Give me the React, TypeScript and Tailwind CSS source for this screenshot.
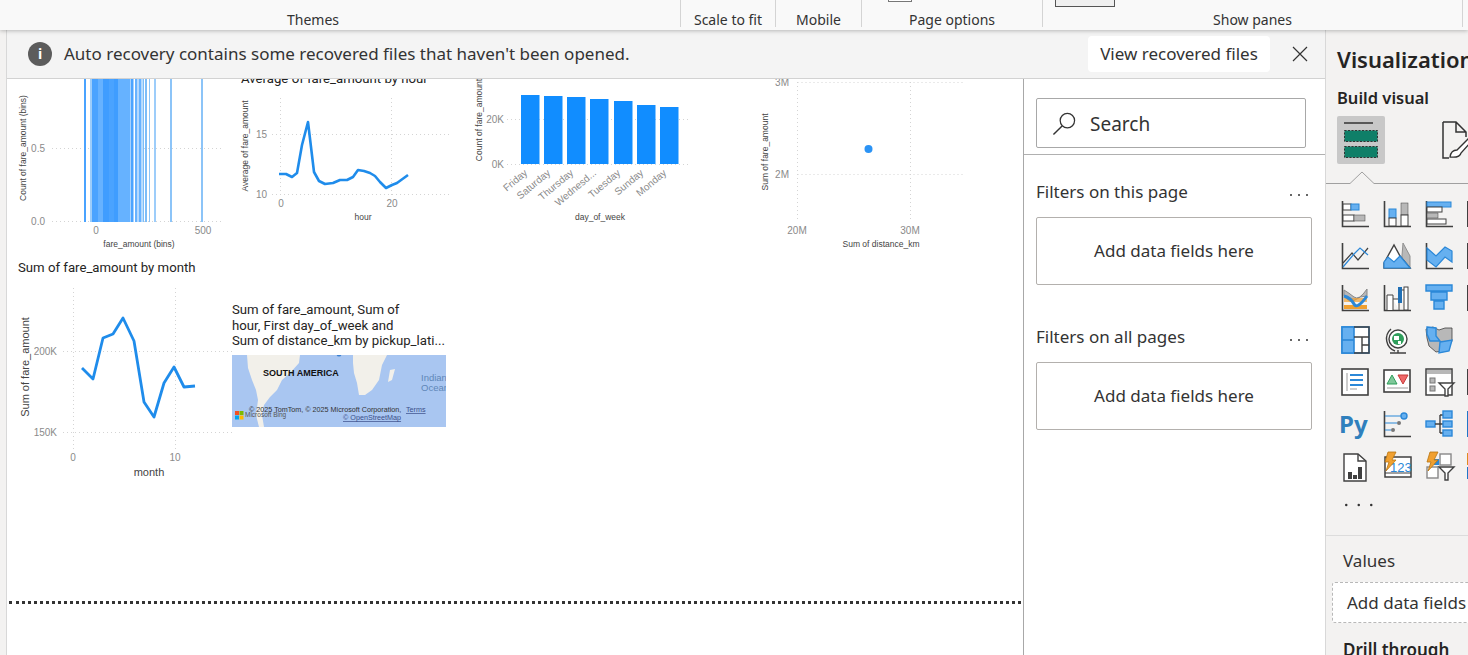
import React from "react";

const DARK = "#404040";
const BLUE = "#2b88d8";
const LIGHT = "#66b0f0";
const GR = "#b8b8b8";

const Ax = () => <path d="M1.5 1v25.5H28" fill="none" stroke={DARK} strokeWidth="1.6" />;

const icons: React.ReactNode[] = [
  <g key="a"><Ax /><rect x="2" y="4" width="8" height="6" fill="#fff" stroke={DARK} /><rect x="10" y="4" width="8" height="6" fill={LIGHT} stroke={BLUE} /><rect x="2" y="15" width="11" height="6" fill="#fff" stroke={DARK} /><rect x="13" y="15" width="11" height="6" fill={GR} stroke={DARK} strokeWidth=".5" /></g>,
  <g key="b"><Ax /><rect x="6" y="9" width="7" height="9" fill={LIGHT} stroke={BLUE} /><rect x="6" y="18" width="7" height="8" fill="#fff" stroke={DARK} /><rect x="18" y="3" width="7" height="12" fill={GR} stroke={DARK} strokeWidth=".5" /><rect x="18" y="15" width="7" height="11" fill="#fff" stroke={DARK} /></g>,
  <g key="c"><Ax /><rect x="2" y="2" width="24" height="5" fill={LIGHT} stroke={BLUE} /><rect x="2" y="7" width="15" height="5" fill="#fff" stroke={DARK} /><rect x="2" y="13" width="11" height="5" fill={GR} stroke={DARK} strokeWidth=".5" /><rect x="2" y="19" width="19" height="5" fill="#fff" stroke={DARK} /></g>,
  <rect key="c4" x="0" y="1" width="2" height="26" fill={DARK} />,
  <g key="d"><Ax /><path d="M2 21 L11 11 L17 18 L27 6" fill="none" stroke={DARK} strokeWidth="1.2" /><path d="M2 25 L13 12 L19 6 L27 13" fill="none" stroke={BLUE} strokeWidth="1.2" /></g>,
  <g key="e"><path d="M20 1 L27 14 V26 H18 Z" fill={GR} stroke="#909090" /><path d="M1 21 L11 3 L17 14 L27 26 H1 Z" fill="#fff" stroke={DARK} strokeWidth="1.4" /><path d="M1 26 V20 L5 15 L11 20 L17 14 L27 26 Z" fill={LIGHT} stroke={BLUE} strokeWidth="1.2" /></g>,
  <g key="f"><Ax /><path d="M2 6 L11 14 L20 5 L27 9 V20 L20 15 L11 25 L2 18 Z" fill={LIGHT} stroke={BLUE} strokeWidth="1.2" /></g>,
  <rect key="f4" x="0" y="1" width="2" height="26" fill={DARK} />,
  <g key="g"><Ax /><path d="M3 6 Q8 9 13 13 T26 5 V12 Q19 12 14 16 T3 12 Z" fill={GR} stroke="#888" /><path d="M3 21 H26 V25 H3 Z" fill="#f0a030" /><path d="M3 14 H26 V18 H3Z" fill="#f0a030" opacity=".7" /><path d="M3 12 Q10 14 13 20 T26 12" fill="none" stroke={BLUE} strokeWidth="3" /></g>,
  <g key="h"><Ax /><path d="M4 26 V11 H10 V26 M10 15 H16 V26 M16 6 H24 V26" fill="#fff" stroke={DARK} strokeWidth="1" /><rect x="15" y="3" width="4" height="16" fill="#1f6fb5" /><rect x="21" y="3" width="4" height="23" fill="#fff" stroke={DARK} /></g>,
  <g key="i"><path d="M1 1 H27 V7 H22 V16 H19 V25 H9 V16 H6 V7 H1 Z" fill={LIGHT} /><path d="M1 1 H27 V7 H1 Z M6 8 H22 V16 H6 Z M9 17 H19 V25 H9 Z" fill={LIGHT} stroke={BLUE} strokeWidth="1.4" /></g>,
  <rect key="i4" x="0" y="1" width="2" height="26" fill={DARK} />,
  <g key="j"><rect x="1" y="1" width="27" height="26" fill="#fff" stroke={BLUE} strokeWidth="1.6" /><rect x="1" y="1" width="12" height="26" fill={LIGHT} stroke={BLUE} strokeWidth="1.6" /><path d="M1 14 H13" stroke={BLUE} strokeWidth="1.6" /><path d="M13 1 H28 V27 H13 M13 11 H28 M21 11 V27 M21 19 H28" fill="none" stroke={DARK} strokeWidth="1.4" /></g>,
  <g key="k"><circle cx="15" cy="13" r="9" fill="#fff" stroke={DARK} strokeWidth="1.4" /><circle cx="15" cy="13" r="6" fill="#2f9e5b" /><path d="M11 10h5v4h-5zM15 15h3v3h-3z" fill="#fff" /><path d="M8 3 A13 13 0 0 0 12 25 M7 27 H23 M15 24 V27" fill="none" stroke={DARK} strokeWidth="1.4" /></g>,
  <g key="l"><path d="M1 3 L8 1 L14 4 L20 2 L27 2 V15 L22 24 L11 26 L4 20 L2 12 Z" fill={GR} stroke={DARK} strokeWidth=".8" /><path d="M2 1 L11 2 V10 L15 15 L5 15 L2 8 Z M15 16 L27 14 L24 25 L14 27 Z" fill={LIGHT} stroke={BLUE} strokeWidth="1.4" /></g>,
  <rect key="l4" x="0" y="1" width="0" height="0" />,
  <g key="m"><rect x="1" y="1" width="26" height="26" fill="#fff" stroke={DARK} strokeWidth="1.6" /><path d="M6 5 V23" stroke={GR} strokeWidth="1.4" /><path d="M9 7 H22 M9 12 H22 M9 17 H22" stroke={BLUE} strokeWidth="2" /><path d="M9 21 H16" stroke={GR} strokeWidth="1.4" /></g>,
  <g key="n"><rect x="1" y="2" width="26" height="22" fill="#fff" stroke={DARK} strokeWidth="1.6" /><path d="M4 16 L9 7 L14 16 Z" fill="#7fc89a" stroke="#2f9e5b" /><path d="M15 7 H25 L20 16 Z" fill="#f06a6a" stroke="#c83a3a" /><path d="M4 20 H25" stroke={GR} strokeWidth="1.4" /></g>,
  <g key="o"><rect x="1" y="1" width="26" height="26" fill="#fff" stroke={DARK} strokeWidth="1.5" /><rect x="2" y="2" width="24" height="4" fill={GR} /><rect x="5" y="10" width="5" height="5" fill={GR} stroke="#777" /><rect x="5" y="18" width="5" height="5" fill={GR} stroke="#777" /><path d="M14 15 H29 L23 21 V28 H20 V21 Z" fill="#fff" stroke={DARK} strokeWidth="1.4" /></g>,
  <rect key="o4" x="0" y="1" width="2" height="26" fill={DARK} />,
  <text key="py" x="-2" y="23" fontSize="24" fontWeight="700" fill="#2f80bd" fontFamily="'Noto Sans',sans-serif">Py</text>,
  <g key="q"><Ax /><path d="M2 6 H18 M2 13 H14 M2 20 H8" stroke={BLUE} strokeWidth="1.2" /><circle cx="21" cy="6" r="3" fill={LIGHT} stroke={BLUE} strokeWidth="1.4" /><circle cx="16" cy="13" r="2" fill="#777" /><circle cx="10" cy="20" r="2" fill="#777" /></g>,
  <g key="r"><rect x="1" y="11" width="9" height="6" fill={LIGHT} stroke={BLUE} strokeWidth="1.4" /><path d="M10 14 H15 M15 5 V23 M15 5 H18 M15 14 H18 M15 23 H18" fill="none" stroke={DARK} strokeWidth="1.4" /><rect x="18" y="1" width="9" height="7" fill={LIGHT} stroke={BLUE} strokeWidth="1.4" /><rect x="18" y="11" width="9" height="6" fill={LIGHT} stroke={BLUE} strokeWidth="1.4" /><rect x="18" y="20" width="9" height="6" fill={LIGHT} stroke={BLUE} strokeWidth="1.4" /></g>,
  <rect key="r4" x="0" y="1" width="3" height="26" fill="#1f77c8" />,
  <g key="s"><path d="M3 2 H17 L25 9 V29 H3 Z" fill="#fff" stroke={DARK} strokeWidth="1.4" /><path d="M17 2 V9 H25" fill="none" stroke={DARK} strokeWidth="1.4" /><rect x="7" y="20" width="4" height="7" fill={DARK} /><rect x="12" y="23" width="4" height="4" fill={DARK} /><rect x="17" y="15" width="4" height="12" fill={DARK} /></g>,
  <g key="t"><rect x="2" y="5" width="26" height="20" fill="#fff" stroke={DARK} strokeWidth="1.5" /><path d="M2 21 H28" stroke={DARK} /><text x="7" y="20" fontSize="13" fill="#2b88d8" fontFamily="'Liberation Sans',sans-serif">123</text><path d="M5 0 H13 L9 8 H13 L3 19 L6 10 H2 Z" fill="#f0a030" stroke="#b87510" strokeWidth=".8" /></g>,
  <g key="u"><rect x="15" y="2" width="11" height="11" fill="#fff" stroke="#888" strokeWidth="1.4" /><rect x="2" y="15" width="11" height="11" fill="#fff" stroke="#888" strokeWidth="1.4" /><rect x="9" y="7" width="5" height="6" fill={BLUE} /><path d="M14 15 H29 L23 21 V28 H20 V21 Z" fill="#fff" stroke={DARK} strokeWidth="1.4" /><path d="M5 0 H13 L9 8 H13 L3 19 L6 10 H2 Z" fill="#f0a030" stroke="#b87510" strokeWidth=".8" /></g>,
  <g key="v"><rect x="0" y="1" width="4" height="12" fill="#e08a20" /><rect x="0" y="15" width="4" height="12" fill="#1f77c8" /></g>,
];

const IconGrid = () => (
  <div className="grid grid-cols-[repeat(4,42px)] auto-rows-[42px] pl-[15px] mt-[16px]">
    {icons.map((ic, i) => (
      <svg key={i} viewBox="0 0 28 30" className="w-[28px] h-[30px] overflow-visible">
        {ic}
      </svg>
    ))}
  </div>
);

const AX = "'Liberation Sans',sans-serif";
const Tick = ({ x, y, t, a = "middle" }: { x: number; y: number; t: string; a?: "middle" | "end" }) => (
  <text x={x} y={y} textAnchor={a} fontSize="10" fill="#8a8a8a" fontFamily={AX}>{t}</text>
);
const AxisT = ({ x, y, t, size = 8.5, rot = false }: { x: number; y: number; t: string; size?: number; rot?: boolean }) => (
  <text x={x} y={y} textAnchor="middle" fontSize={size} fill="#444" fontFamily={AX} transform={rot ? `rotate(-90 ${x} ${y})` : undefined}>{t}</text>
);
const Grid = ({ d }: { d: string }) => <path d={d} fill="none" stroke="#d4d4d4" strokeWidth="1" strokeDasharray="1 3" />;

const HBars: [number, number, string][] = [
  [84, 2, "#4aa3ff"], [90, 2, "#9dcdfa"], [92, 6, "#4aa3ff"], [98, 5, "#66b2ff"], [103, 6, "#3f9dff"], [109, 5, "#4aa3ff"], [114, 4, "#3f9dff"], [118, 12, "#66b2ff"],
  [130.5, 3, "#4aa3ff"], [135, 2.5, "#66b2ff"], [138.5, 3, "#66b2ff"], [142.5, 1.5, "#7dbdf8"], [145, 2, "#7dbdf8"], [149, 1, "#8cc4f8"], [154, 2, "#9dcdfa"], [170, 2, "#8cc4f8"], [201, 2, "#8cc4f8"],
];

const Chart1 = () => (
  <svg viewBox="10 79 222 176" className="absolute left-[3px] top-0 w-[222px] h-[176px]">
    <Grid d="M52 148.500H224 M52 221.500H224" />
    {HBars.map(([x, w, c]) => <rect key={x} x={x} y="79" width={w} height="143" fill={c} />)}
    <Tick x={45} y={152} t="0.5" a="end" />
    <Tick x={45} y={225} t="0.0" a="end" />
    <Tick x={96} y={234} t="0" />
    <Tick x={203} y={234} t="500" />
    <AxisT x={139} y={247} t="fare_amount (bins)" />
    <AxisT x={26} y={148} t="Count of fare_amount (bins)" rot />
  </svg>
);

const hourPts = "279,174 286,174 292,177 297,173 302,145 308,122 314,172 319,181 325,184 333,183 340,180 347,180 353,177 358,170 364,171 370,173 375,176 380,182 386,188 392,185 397,183 408,175";
const Chart2 = () => (
  <svg viewBox="236 69 224 160" className="absolute left-[229px] top-[-10px] w-[224px] h-[160px]">
    <text x="241" y="83" fontSize="13.200" fill="#222" fontFamily="Roboto,sans-serif">Average of fare_amount by hour</text>
    <Grid d="M272 134.500H452 M272 194.500H452 M280.500 98V198 M391.500 98V198" />
    <polyline points={hourPts} fill="none" stroke="#1f8ceb" strokeWidth="2.600" strokeLinejoin="round" />
    <Tick x={267} y={138} t="15" a="end" />
    <Tick x={267} y={198} t="10" a="end" />
    <Tick x={281} y={207} t="0" />
    <Tick x={392} y={207} t="20" />
    <AxisT x={363} y={220} t="hour" />
    <AxisT x={248} y={146} t="Average of fare_amount" rot />
  </svg>
);

const days: [string, number, number][] = [
  ["Friday", 521, 95], ["Saturday", 544, 96], ["Thursday", 567, 97], ["Wednesd...", 590, 99], ["Tuesday", 614, 101], ["Sunday", 637, 105], ["Monday", 660, 107],
];
const Chart3 = () => (
  <svg viewBox="470 69 230 160" className="absolute left-[463px] top-[-10px] w-[230px] h-[160px]">
    <Grid d="M507 119.500H688 M507 164.500H688" />
    {days.map(([d, x, y]) => <rect key={d} x={x} y={y} width="18.500" height={164 - y} fill="#118dff" />)}
    {days.map(([d, x]) => (
      <text key={d} x={x + 7} y={174} fontSize="10" fill="#8a8a8a" textAnchor="end" fontFamily={AX} transform={`rotate(-40 ${x + 7} 174)`}>{d}</text>
    ))}
    <Tick x={504} y={123} t="20K" a="end" />
    <Tick x={504} y={168} t="0K" a="end" />
    <AxisT x={600} y={220} t="day_of_week" />
    <AxisT x={482} y={120} t="Count of fare_amount" rot />
  </svg>
);

const Chart4 = () => (
  <svg viewBox="755 69 220 190" className="absolute left-[748px] top-[-10px] w-[220px] h-[190px]">
    <Grid d="M797.500 82.500H964 M797.500 174.500H964 M797.500 82V222 M910.500 82V222" />
    <circle cx="868.500" cy="149" r="4" fill="#2b93f5" />
    <Tick x={789} y={86} t="3M" a="end" />
    <Tick x={789} y={178} t="2M" a="end" />
    <Tick x={797} y={234} t="20M" />
    <Tick x={910} y={234} t="30M" />
    <AxisT x={881} y={247} t="Sum of distance_km" />
    <AxisT x={768} y={152} t="Sum of fare_amount" rot />
  </svg>
);

const Chart5 = () => (
  <div className="absolute left-[11px] top-[180px] w-[225px] h-[224px]">
    <div className="text-[13.200px] leading-[17px] text-[#252423] font-[Roboto,sans-serif] whitespace-nowrap">Sum of fare_amount by month</div>
    <svg viewBox="18 278 225 205" className="block w-[225px] h-[205px] mt-[2px]">
      <Grid d="M63 351.500H232 M63 432.500H232 M73.500 288V450 M175.500 288V450" />
      <polyline points="82,368 93,379 103,338 113,334 123,318 134,341 144,402 154,417 164,383 174,367 184,387 195,386" fill="none" stroke="#1f8ceb" strokeWidth="2.800" strokeLinejoin="round" />
      <Tick x={57} y={355} t="200K" a="end" />
      <Tick x={57} y={436} t="150K" a="end" />
      <Tick x={73} y={461} t="0" />
      <Tick x={175} y={461} t="10" />
      <AxisT x={149} y={476} t="month" size={11} />
      <AxisT x={29} y={367} t="Sum of fare_amount" size={11} rot />
    </svg>
  </div>
);

const MapVisual = () => (
  <div className="absolute left-[225px] top-[222px] w-[214px]">
    <div className="text-[13.200px] leading-[15.500px] text-[#252423] font-[Roboto,sans-serif] h-[54px] pt-[1px] whitespace-nowrap">
      Sum of fare_amount, Sum of<br />hour, First day_of_week and<br />Sum of distance_km by pickup_lati...
    </div>
    <svg viewBox="0 0 214 72" className="block w-[214px] h-[72px] bg-[#a9c6f1]">
      <path d="M15 0H68L67 8L58 18L50 25L45 35L38 42L32 50L30 60L32 72H27L24 60L26 45L24 35L20 25L16 13Z" fill="#f2f0ea" />
      <path d="M121 0H155L150 10L147 25L140 35L133 40L127 40L125 28L122 18L121 8Z" fill="#f2f0ea" />
      <path d="M158 15L163 14L160 25L156 27Z" fill="#f2f0ea" />
      <circle cx="107" cy="-1" r="2.500" fill="#3a7fd0" />
      <text x="31" y="21" fontSize="9" fontWeight="700" fill="#111" fontFamily={AX}>SOUTH AMERICA</text>
      <text x="189" y="26" fontSize="9.500" fill="#5f86b8" fontFamily={AX}>Indian</text>
      <text x="189" y="36" fontSize="9.500" fill="#5f86b8" fontFamily={AX}>Ocean</text>
      <text x="17" y="57" fontSize="7.200" fill="#333" fontFamily={AX}>© 2025 TomTom, © 2025 Microsoft Corporation,</text>
      <text x="174" y="57" fontSize="7.200" fill="#3b4f8a" textDecoration="underline" fontFamily={AX}>Terms</text>
      <text x="111" y="65" fontSize="7.200" fill="#3b4f8a" textDecoration="underline" fontFamily={AX}>© OpenStreetMap</text>
      <text x="13" y="62" fontSize="6.500" fill="#555" fontFamily={AX}>Microsoft Bing</text>
      <rect x="3" y="56" width="4" height="4" fill="#f25022" /><rect x="7.500" y="56" width="4" height="4" fill="#7fba00" />
      <rect x="3" y="60.500" width="4" height="4" fill="#00a4ef" /><rect x="7.500" y="60.500" width="4" height="4" fill="#ffb900" />
    </svg>
  </div>
);

const Dots = ({ className }: { className: string }) => (
  <div className={`flex ${className}`}>
    <i className="block w-[2px] h-[2px] rounded-full bg-[#333]" />
    <i className="block w-[2px] h-[2px] rounded-full bg-[#333]" />
    <i className="block w-[2px] h-[2px] rounded-full bg-[#333]" />
  </div>
);

const FilterSection = ({ title, className }: { title: string; className: string }) => (
  <div className={className}>
    <div className="flex items-center justify-between pl-[12px] pr-[17px] h-[24px]">
      <span className="text-[17px] text-[#333]">{title}</span>
      <Dots className="gap-[6px] mt-[6px]" />
    </div>
    <div className="ml-[12px] mt-[13px] w-[276px] h-[68px] border border-[#b3b0ad] rounded-[2px] flex items-center justify-center text-[17px] text-[#333]">Add data fields here</div>
  </div>
);

function RibbonSeg({ label, className, box }: { label: string; className: string; box?: string }) {
  return (
    <div className={`h-[27px] flex flex-col justify-end items-center relative ${className}`}>
      {box && <div className={box} />}
      <span className="text-[14px] leading-[19px] text-[#333] translate-y-[2px]">{label}</span>
    </div>
  );
}

export default function App() {
  return (
    <div className="w-[1468px] h-[655px] overflow-hidden flex flex-col bg-white text-[#252423] font-['Noto_Sans',sans-serif]">
      <div className="h-[30px] shrink-0 bg-[#f9f9f9] flex relative z-20 shadow-[0_1px_4px_rgba(0,0,0,0.25)]">
        <RibbonSeg label="Themes" className="w-[680px] pr-[54px]" />
        <RibbonSeg label="Scale to fit" className="w-[95px] border-l border-[#d4d4d4]" />
        <RibbonSeg label="Mobile" className="w-[86px] border-l border-[#d4d4d4]" />
        <RibbonSeg label="Page options" className="w-[181px] border-l border-[#d4d4d4]" box="absolute left-[26px] -top-[6px] w-[24px] h-[8px] border border-[#777] bg-white" />
        <RibbonSeg label="Show panes" className="w-[420px] border-l border-[#d4d4d4]" box="absolute left-[12px] -top-[2px] w-[60px] h-[9px] border border-[#555] bg-[#f0f0f0]" />
        <div className="h-[27px] border-l border-[#d4d4d4]" />
      </div>
      <div className="flex flex-1 min-h-0">
        <div className="w-[7px] shrink-0 bg-[#f3f2f1] border-r border-[#d8d8d8]" />
        <div className="w-[1318px] shrink-0 flex flex-col">
          <div className="h-[49px] shrink-0 bg-[#f4f4f4] border-b border-[#d2d2d2] flex items-center relative z-10">
            <div className="ml-[21px] w-[24px] h-[24px] rounded-full bg-[#5c5c5c] flex items-center justify-center text-white text-[14px] font-bold leading-none">i</div>
            <span className="ml-[12px] text-[17px] text-[#333] whitespace-nowrap">Auto recovery contains some recovered files that haven't been opened.</span>
            <div className="ml-auto w-[182px] h-[36px] bg-white rounded-[4px] flex items-center justify-center text-[17px] text-[#333]">View recovered files</div>
            <svg viewBox="0 0 16 16" className="w-[16px] h-[16px] ml-[22px] mr-[17px]"><path d="M1 1L15 15M15 1L1 15" stroke="#333" strokeWidth="1.200" /></svg>
          </div>
          <div className="flex-1 min-h-0 flex">
            <div className="w-[1016px] shrink-0 relative overflow-hidden">
              <Chart1 />
              <Chart2 />
              <Chart3 />
              <Chart4 />
              <Chart5 />
              <MapVisual />
              <div className="absolute left-[2px] right-[2px] top-[522px] border-t-[3px] border-dotted border-[#333]" />
            </div>
            <div className="w-[302px] shrink-0 border-l border-[#a8a8a8] bg-white">
              <div className="h-[76px] border-b border-[#b0b0b0] pl-[12px] pt-[19px]">
                <div className="w-[270px] h-[50px] border border-[#a8a8a8] rounded-[2px] flex items-center pl-[15px]">
                  <svg viewBox="0 0 26 26" className="w-[25px] h-[25px]"><circle cx="16" cy="10" r="7.500" fill="none" stroke="#333" strokeWidth="1.300" /><path d="M10.500 15.500L1.500 24.500" stroke="#333" strokeWidth="1.500" /></svg>
                  <span className="ml-[13px] text-[19px] text-[#333] translate-y-[1px]">Search</span>
                </div>
              </div>
              <FilterSection title="Filters on this page" className="mt-[25px]" />
              <FilterSection title="Filters on all pages" className="mt-[40px]" />
            </div>
          </div>
        </div>
        <div className="flex-1 min-w-0 overflow-hidden bg-[#f3f2f1] border-l border-[#d8d8d8] relative z-10 flex flex-col">
          <div className="pl-[11px] pt-[11px] text-[22px] leading-[36px] font-semibold text-[#252423] whitespace-nowrap">Visualizations</div>
          <div className="pl-[11px] mt-[9px] text-[16.500px] leading-[24px] font-semibold whitespace-nowrap">Build visual</div>
          <div className="flex items-center pl-[11px] mt-[6px] h-[48px]">
            <div className="w-[48px] h-[48px] bg-[#c8c8c8] rounded-[2px] flex items-center justify-center shrink-0">
              <svg viewBox="0 0 36 38" className="w-[36px] h-[38px]">
                <path d="M1 2H30" stroke="#333" strokeWidth="1.500" />
                <rect x="1.500" y="9.500" width="33" height="11" fill="#0f7f68" stroke="#333" strokeDasharray="2 1.500" />
                <rect x="1.500" y="25.500" width="33" height="11" fill="#0f7f68" stroke="#333" strokeDasharray="2 1.500" />
              </svg>
            </div>
            <svg viewBox="0 0 30 38" className="w-[30px] h-[38px] ml-[57px] shrink-0">
              <path d="M1 1H14L24 11V16M24 11H14V1M1 1V37H7" fill="none" stroke="#333" strokeWidth="1.500" />
              <path d="M8 36 Q9 29 15 29 L26 18 L29 21 L19 32 Q18 37 8 36Z" fill="#fff" stroke="#333" strokeWidth="1.300" />
            </svg>
          </div>
          <div className="h-[19px] mt-[1px] shrink-0">
            <svg viewBox="0 0 143 19" className="block w-[143px] h-[19px]"><path d="M0 18.500H24L36 7L48 18.500H143" fill="none" stroke="#a0a0a0" strokeWidth="1" /></svg>
          </div>
          <IconGrid />
          <Dots className="ml-[19px] mt-[10px] gap-[8px] scale-125 origin-left" />
          <div className="border-t border-[#dcdcdc] mt-[29px] pt-[13px]">
            <div className="pl-[17px] text-[17px] leading-[24px] text-[#333]">Values</div>
            <div className="ml-[6px] mt-[9px] w-[200px] h-[41px] bg-white border border-dashed border-[#b8b8b8] rounded-[3px] flex items-center pl-[14px] text-[17px] text-[#333] whitespace-nowrap">Add data fields here</div>
            <div className="pl-[17px] mt-[15px] text-[17px] leading-[24px] font-semibold whitespace-nowrap">Drill through</div>
          </div>
        </div>
      </div>
    </div>
  );
}
